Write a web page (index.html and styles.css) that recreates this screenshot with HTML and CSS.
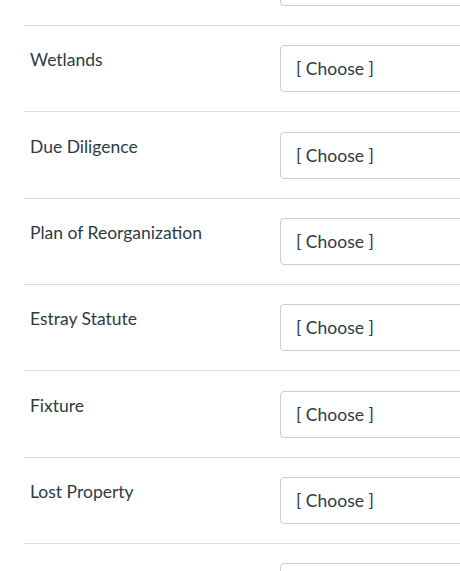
FILE: index.html
```html
<!DOCTYPE html>
<html lang="en">
<head>
<meta charset="utf-8">
<title>Matching</title>
<link rel="stylesheet" href="styles.css">
</head>
<body>
<div class="list">
  <div class="row row--first">
    <div class="label">Abandoned Property</div>
    <div class="answer"><select class="choose"><option>[ Choose ]</option></select></div>
  </div>
  <div class="row">
    <div class="label">Wetlands</div>
    <div class="answer"><select class="choose"><option>[ Choose ]</option></select></div>
  </div>
  <div class="row">
    <div class="label">Due Diligence</div>
    <div class="answer"><select class="choose"><option>[ Choose ]</option></select></div>
  </div>
  <div class="row">
    <div class="label">Plan of Reorganization</div>
    <div class="answer"><select class="choose"><option>[ Choose ]</option></select></div>
  </div>
  <div class="row">
    <div class="label">Estray Statute</div>
    <div class="answer"><select class="choose"><option>[ Choose ]</option></select></div>
  </div>
  <div class="row">
    <div class="label">Fixture</div>
    <div class="answer"><select class="choose"><option>[ Choose ]</option></select></div>
  </div>
  <div class="row">
    <div class="label">Lost Property</div>
    <div class="answer"><select class="choose"><option>[ Choose ]</option></select></div>
  </div>
  <div class="row">
    <div class="label">Mislaid Property</div>
    <div class="answer"><select class="choose"><option>[ Choose ]</option></select></div>
  </div>
</div>
</body>
</html>
```

FILE: styles.css
```css
html, body {
  margin: 0;
  padding: 0;
  background: #ffffff;
  overflow: hidden;
}
body {
  font-family: Lato, "Liberation Sans", sans-serif;
  font-size: 17.5px;
  line-height: 24px;
  color: #2d3b45;
}
.list {
  margin-top: -60.2px;
  padding-left: 24px;
  width: 600px;
}
.row {
  display: flex;
  align-items: flex-start;
  border-top: 1px solid #dddddd;
  padding: 19.16px 0 19.17px;
}
.row--first {
  border-top: none;
}
.label {
  width: 250px;
  padding: 3px 0 0 6px;
  flex: none;
}
.answer {
  flex: none;
}
.choose {
  -webkit-appearance: none;
  appearance: none;
  box-sizing: border-box;
  width: 320px;
  height: 47px;
  margin: 0;
  padding: 0 15px;
  border: 1px solid #c7cdd1;
  border-radius: 4px;
  background: #ffffff;
  font-family: Lato, "Liberation Sans", sans-serif;
  font-size: 17.5px;
  color: #2d3b45;
}
```
